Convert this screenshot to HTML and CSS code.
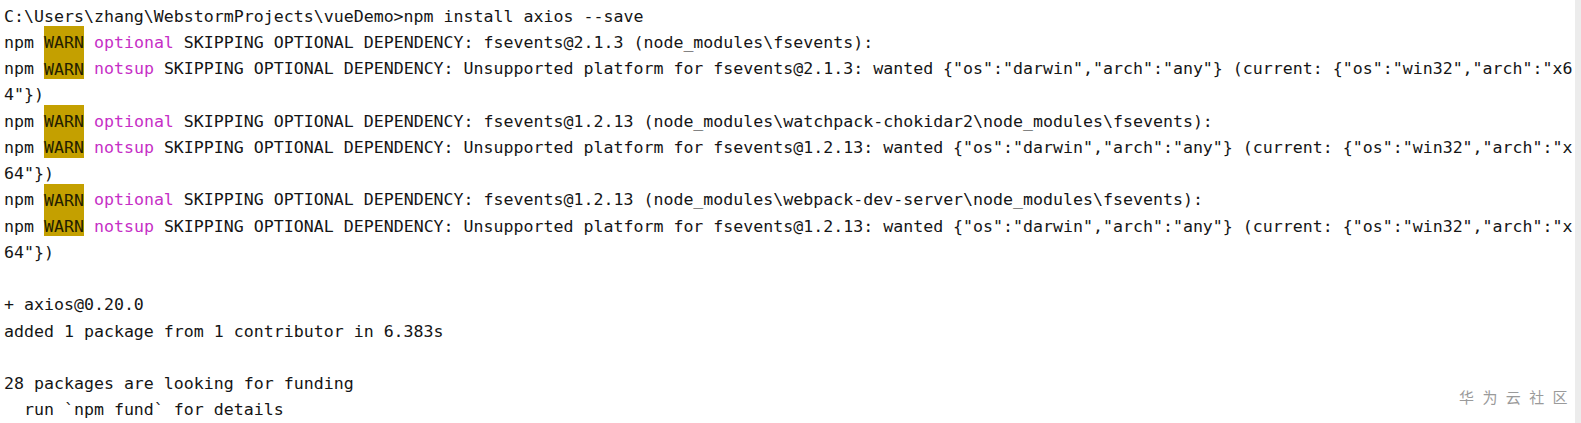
FILE: index.html
```html
<!DOCTYPE html>
<html lang="zh">
<head>
<meta charset="utf-8">
<title>Terminal</title>
<link rel="stylesheet" href="styles.css">
</head>
<body>
<div class="window">
  <div class="terminal">
    <div class="line">C:\Users\zhang\WebstormProjects\vueDemo&gt;npm install axios --save</div>
    <div class="line">npm <span class="warn">WARN</span> <span class="tag">optional</span> SKIPPING OPTIONAL DEPENDENCY: fsevents@2.1.3 (node_modules\fsevents):</div>
    <div class="line">npm <span class="warn">WARN</span> <span class="tag">notsup</span> SKIPPING OPTIONAL DEPENDENCY: Unsupported platform for fsevents@2.1.3: wanted {"os":"darwin","arch":"any"} (current: {"os":"win32","arch":"x6</div>
    <div class="line">4"})</div>
    <div class="line">npm <span class="warn">WARN</span> <span class="tag">optional</span> SKIPPING OPTIONAL DEPENDENCY: fsevents@1.2.13 (node_modules\watchpack-chokidar2\node_modules\fsevents):</div>
    <div class="line">npm <span class="warn">WARN</span> <span class="tag">notsup</span> SKIPPING OPTIONAL DEPENDENCY: Unsupported platform for fsevents@1.2.13: wanted {"os":"darwin","arch":"any"} (current: {"os":"win32","arch":"x</div>
    <div class="line">64"})</div>
    <div class="line">npm <span class="warn">WARN</span> <span class="tag">optional</span> SKIPPING OPTIONAL DEPENDENCY: fsevents@1.2.13 (node_modules\webpack-dev-server\node_modules\fsevents):</div>
    <div class="line">npm <span class="warn">WARN</span> <span class="tag">notsup</span> SKIPPING OPTIONAL DEPENDENCY: Unsupported platform for fsevents@1.2.13: wanted {"os":"darwin","arch":"any"} (current: {"os":"win32","arch":"x</div>
    <div class="line">64"})</div>
    <div class="line"> </div>
    <div class="line">+ axios@0.20.0</div>
    <div class="line">added 1 package from 1 contributor in 6.383s</div>
    <div class="line"> </div>
    <div class="line">28 packages are looking for funding</div>
    <div class="line">  run `npm fund` for details</div>
  </div>
  <div class="scrollbar"></div>
</div>
<div class="watermark">华为云社区</div>
</body>
</html>
```
FILE: styles.css
```css
html, body {
  margin: 0;
  padding: 0;
  background: #ffffff;
  overflow: hidden;
}
.window {
  display: flex;
  width: 1581px;
  height: 423px;
}
.terminal {
  flex: 1;
  padding: 3.6px 0 0 4px;
  font-family: "DejaVu Sans Mono", "Liberation Mono", monospace;
  font-size: 16.6px;
  line-height: 26.25px;
  color: #151515;
  overflow: hidden;
}
.line {
  white-space: pre;
  height: 26.25px;
}
.warn {
  background: #c4a000;
  color: #241e00;
  padding: 6.6px 0 0.8px;
}
.tag {
  color: #c62fc6;
}
.scrollbar {
  width: 6px;
  background: #ececec;
}
.watermark {
  position: absolute;
  left: 1459px;
  top: 387px;
  font-family: "Noto Sans CJK SC", sans-serif;
  font-size: 15px;
  letter-spacing: 8.4px;
  color: #9a9a9a;
  line-height: 20px;
}
```
